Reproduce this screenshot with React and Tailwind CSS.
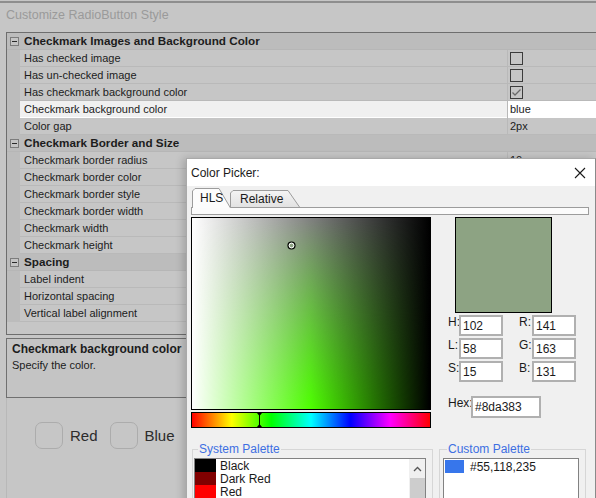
import React from "react"

const sections = [
  {
    title: "Checkmark Images and Background Color",
    rows: [
      { label: "Has checked image", check: false },
      { label: "Has un-checked image", check: false },
      { label: "Has checkmark background color", check: true },
      { label: "Checkmark background color", value: "blue", selected: true },
      { label: "Color gap", value: "2px" },
    ],
  },
  {
    title: "Checkmark Border and Size",
    rows: [
      { label: "Checkmark border radius", value: "10px" },
      { label: "Checkmark border color", value: "" },
      { label: "Checkmark border style", value: "" },
      { label: "Checkmark border width", value: "" },
      { label: "Checkmark width", value: "" },
      { label: "Checkmark height", value: "" },
    ],
  },
  {
    title: "Spacing",
    rows: [
      { label: "Label indent", value: "" },
      { label: "Horizontal spacing", value: "" },
      { label: "Vertical label alignment", value: "" },
    ],
  },
]

const systemColors = [
  { name: "Black", color: "#000000" },
  { name: "Dark Red", color: "#800000" },
  { name: "Red", color: "#ff0000" },
]

function Collapse() {
  return (
    <span className="flex h-[9px] w-[9px] items-center justify-center border border-[#7c7c7c] bg-[#c4c4c4]">
      <span className="h-px w-[5px] bg-[#2a2a2a]" />
    </span>
  )
}

function CheckBox({ checked }) {
  return (
    <span className="flex h-[13px] w-[13px] items-center justify-center border border-[#3c3c3c]">
      {checked && (
        <svg width="11" height="11" viewBox="0 0 11 11">
          <path d="M1.5 5.5 L4 8 L9.5 2.5" fill="none" stroke="#6a6a6a" strokeWidth="1.3" />
        </svg>
      )}
    </span>
  )
}

function PropertyGrid() {
  return (
    <div className="ml-[6px] h-[303px] border-y border-l border-[#6e6e6e]">
      {sections.map((section) => (
        <div key={section.title}>
          <div className="flex h-[17px] items-center border-b border-[#b6b6b6] bg-[#bcbcbc]">
            <span className="ml-[3px] mr-[5px]">
              <Collapse />
            </span>
            <span className="text-[11.7px] font-bold">{section.title}</span>
          </div>
          {section.rows.map((row) => (
            <div key={row.label} className="flex h-[17px] bg-[#bcbcbc]">
              <div className="w-[13px] shrink-0" />
              <div
                className={`flex w-[487px] shrink-0 items-center border-b pl-[4px] ${
                  row.selected ? "border-white bg-[#f0f0f0]" : "border-[#b9b9b9] bg-[#c6c6c6]"
                }`}
              >
                {row.label}
              </div>
              <div className="w-px shrink-0 bg-[#b9b9b9]" />
              <div
                className={`flex flex-1 items-center border-b pl-[2px] ${
                  row.selected ? "border-white bg-white" : "border-[#b9b9b9] bg-[#c6c6c6]"
                }`}
              >
                {row.check !== undefined ? <CheckBox checked={row.check} /> : row.value}
              </div>
            </div>
          ))}
        </div>
      ))}
    </div>
  )
}

function FakeRadio({ label }) {
  return (
    <div className="flex items-center">
      <span className="h-[27px] w-[28px] rounded-[7px] border border-[#acacac]" />
      <span className="ml-[7px] text-[15px] text-[#2c2c2c]">{label}</span>
    </div>
  )
}

function Tab({ label, width, active }) {
  const w = width
  const h = active ? 20 : 17
  return (
    <div
      className={`relative flex items-center ${active ? "z-10 h-[20px] pl-[8px]" : "-ml-[1px] mt-[2px] h-[17px] pl-[10px]"}`}
      style={{ width: w }}
    >
      <svg className="absolute inset-0" width={w} height={h}>
        <defs>
          <linearGradient id="tabFill" x1="0" y1="0" x2="0" y2="1">
            <stop offset="0" stopColor="#f4f4f4" />
            <stop offset="1" stopColor="#e2e2e2" />
          </linearGradient>
        </defs>
        <path
          d={`M0.5 ${h} L0.5 3 L3 0.5 L${w - 12} 0.5 L${w - 0.5} ${h}`}
          fill={active ? "#fcfcfc" : "url(#tabFill)"}
          stroke="#9c9c9c"
        />
      </svg>
      <span className="relative text-[12px] text-[#1a1a1a]">{label}</span>
    </div>
  )
}

function ShadeField() {
  return (
    <div className="relative h-[193px] w-[240px] border border-black">
      <svg width="238" height="191" viewBox="0 0 238 191" className="block">
        <defs>
          <linearGradient id="pure" x1="0" y1="0" x2="1" y2="0">
            <stop offset="0" stopColor="#ffffff" />
            <stop offset="0.5" stopColor="#4dff00" />
            <stop offset="1" stopColor="#000000" />
          </linearGradient>
          <linearGradient id="grey" x1="0" y1="0" x2="1" y2="0">
            <stop offset="0" stopColor="#ffffff" />
            <stop offset="0.5" stopColor="#808080" />
            <stop offset="1" stopColor="#000000" />
          </linearGradient>
          <linearGradient id="fade" x1="0" y1="0" x2="0" y2="1">
            <stop offset="0" stopColor="#ffffff" />
            <stop offset="1" stopColor="#000000" />
          </linearGradient>
          <mask id="fadeMask">
            <rect width="238" height="191" fill="url(#fade)" />
          </mask>
        </defs>
        <rect width="238" height="191" fill="url(#pure)" />
        <rect width="238" height="191" fill="url(#grey)" mask="url(#fadeMask)" />
        <circle cx="99.5" cy="27.5" r="3.5" fill="#8da383" stroke="#000" strokeWidth="1.2" />
        <circle cx="99.5" cy="27.5" r="2.3" fill="none" stroke="#fff" strokeWidth="1" />
      </svg>
    </div>
  )
}

function HueBar() {
  return (
    <div className="mt-[2px] h-[16px] w-[240px] border border-black">
      <svg width="238" height="14" viewBox="0 0 238 14" className="block">
        <defs>
          <linearGradient id="hue" x1="0" y1="0" x2="1" y2="0">
            <stop offset="0" stopColor="#ff0000" />
            <stop offset="0.1667" stopColor="#ffff00" />
            <stop offset="0.3333" stopColor="#00ff00" />
            <stop offset="0.5" stopColor="#00ffff" />
            <stop offset="0.6667" stopColor="#0000ff" />
            <stop offset="0.8333" stopColor="#ff00ff" />
            <stop offset="1" stopColor="#ff0000" />
          </linearGradient>
        </defs>
        <rect width="238" height="14" fill="url(#hue)" />
        <path d="M67.5 0 L67.5 14" stroke="#000" strokeWidth="1" />
        <path d="M65 0 L70 0 L67.5 3 Z M65 14 L70 14 L67.5 11 Z" fill="#000" />
      </svg>
    </div>
  )
}

function NumField({ label, value, labelWidth }) {
  return (
    <div className="flex items-start">
      <span className="pt-[1px] text-[12px] text-[#1a1a1a]" style={{ width: labelWidth }}>
        {label}
      </span>
      <div className="flex h-[21px] w-[44px] items-center border-2 border-[#b0b0b0] bg-white pl-[2px] text-[12px] text-[#1a1a1a]">
        {value}
      </div>
    </div>
  )
}

function ColorPicker() {
  return (
    <div className="absolute left-[186px] top-[158px] h-[350px] w-[410px] border border-[#a9a9a9] border-r-[#8a8a8a] bg-[#f0f0f0] shadow-[-3px_0_8px_rgba(0,0,0,0.18)]">
      <div className="flex h-[27px] items-center justify-between bg-white pl-[4px] pr-[9px]">
        <span className="text-[12px] text-[#1a1a1a]">Color Picker:</span>
        <svg width="12" height="12" viewBox="0 0 12 12">
          <path d="M1 1 L11 11 M11 1 L1 11" stroke="#1a1a1a" strokeWidth="1.1" />
        </svg>
      </div>

      <div className="flex flex-col pl-[4px]">
        <div className="ml-[1px] mt-[2px] flex items-start">
          <Tab label="HLS" width={39} active />
          <Tab label="Relative" width={70} />
        </div>
        <div className="-mt-px h-[8px] w-[398px] border border-[#9c9c9c] bg-[#fbfbfb]" />

        <div className="mt-[2px] flex">
          <div>
            <ShadeField />
            <HueBar />
          </div>
          <div className="ml-[17px] flex flex-col">
            <div className="ml-[7px] h-[96px] w-[97px] border border-black bg-[#8da383]" />
            <div className="mt-[2px] flex flex-col gap-[2px]">
              <div className="flex gap-[16px]">
                <NumField label="H:" value="102" labelWidth={11} />
                <NumField label="R:" value="141" labelWidth={13} />
              </div>
              <div className="flex gap-[16px]">
                <NumField label="L:" value="58" labelWidth={11} />
                <NumField label="G:" value="163" labelWidth={13} />
              </div>
              <div className="flex gap-[16px]">
                <NumField label="S:" value="15" labelWidth={11} />
                <NumField label="B:" value="131" labelWidth={13} />
              </div>
            </div>
            <div className="mt-[14px] flex items-start">
              <span className="w-[23px] pt-[1px] text-[12px] text-[#1a1a1a]">Hex:</span>
              <div className="flex h-[22px] w-[70px] items-center border-2 border-[#b0b0b0] bg-white pl-[2px] text-[12px] text-[#1a1a1a]">
                #8da383
              </div>
            </div>
          </div>
        </div>

        <div className="ml-[1px] mt-[14px] flex gap-[6px]">
          <fieldset className="h-[80px] w-[241px] border border-[#d6d6d6] pl-px">
            <legend className="ml-[4px] px-px text-[12px] leading-[14px] text-[#3d6fe2]">System Palette</legend>
            <div className="mt-[2px] flex h-[70px] w-[232px] border border-[#828282] bg-white">
              <div className="flex-1">
                {systemColors.map((c) => (
                  <div key={c.name} className="flex h-[13px] items-center">
                    <span className="h-[13px] w-[21px]" style={{ backgroundColor: c.color }} />
                    <span className="ml-[4px] text-[12px] text-[#1a1a1a]">{c.name}</span>
                  </div>
                ))}
              </div>
              <div className="flex w-[16px] flex-col items-center bg-[#f0f0f0]">
                <svg width="9" height="17" viewBox="0 0 9 17" className="mt-[1px]">
                  <path d="M1 11 L4.5 7.5 L8 11" fill="none" stroke="#555" strokeWidth="1.3" />
                </svg>
                <div className="mt-px h-[40px] w-[15px] bg-[#cdcdcd]" />
              </div>
            </div>
          </fieldset>
          <fieldset className="h-[80px] w-[147px] border border-[#d6d6d6] pl-[3px]">
            <legend className="ml-[4px] px-px text-[12px] leading-[14px] text-[#3d6fe2]">Custom Palette</legend>
            <div className="mt-[2px] h-[70px] w-[136px] border border-[#828282] bg-white pl-px pt-px">
              <div className="flex h-[13px] items-center">
                <span className="h-[13px] w-[19px] bg-[#3776eb]" />
                <span className="ml-[6px] text-[12px] text-[#1a1a1a]">#55,118,235</span>
              </div>
            </div>
          </fieldset>
        </div>
      </div>
    </div>
  )
}

export default function App() {
  return (
    <div className="relative h-[498px] w-[596px] overflow-hidden bg-[#c6c6c6] font-['Liberation_Sans',sans-serif] text-[11px] leading-none text-[#1c1c1c]">
      <div className="mt-px h-[2px] bg-[#8e8e8e]" />
      <div className="flex h-[29px] items-center pb-[4px] pl-[6px] text-[12.5px] text-[#9a9a9a]">Customize RadioButton Style</div>

      <PropertyGrid />

      <div className="ml-[6px] mt-[3px] h-[60px] border-y border-l border-[#707070] bg-[#c4c4c4] px-[5px] pt-[4px]">
        <div className="text-[12px] font-bold">Checkmark background color</div>
        <div className="mt-[5px]">Specify the color.</div>
      </div>

      <div className="ml-[6px] flex h-[102px] items-start gap-[12px] border-l border-[#b8b8b8] pl-[28px] pt-[24px]">
        <FakeRadio label="Red" />
        <FakeRadio label="Blue" />
      </div>

      <ColorPicker />
    </div>
  )
}
